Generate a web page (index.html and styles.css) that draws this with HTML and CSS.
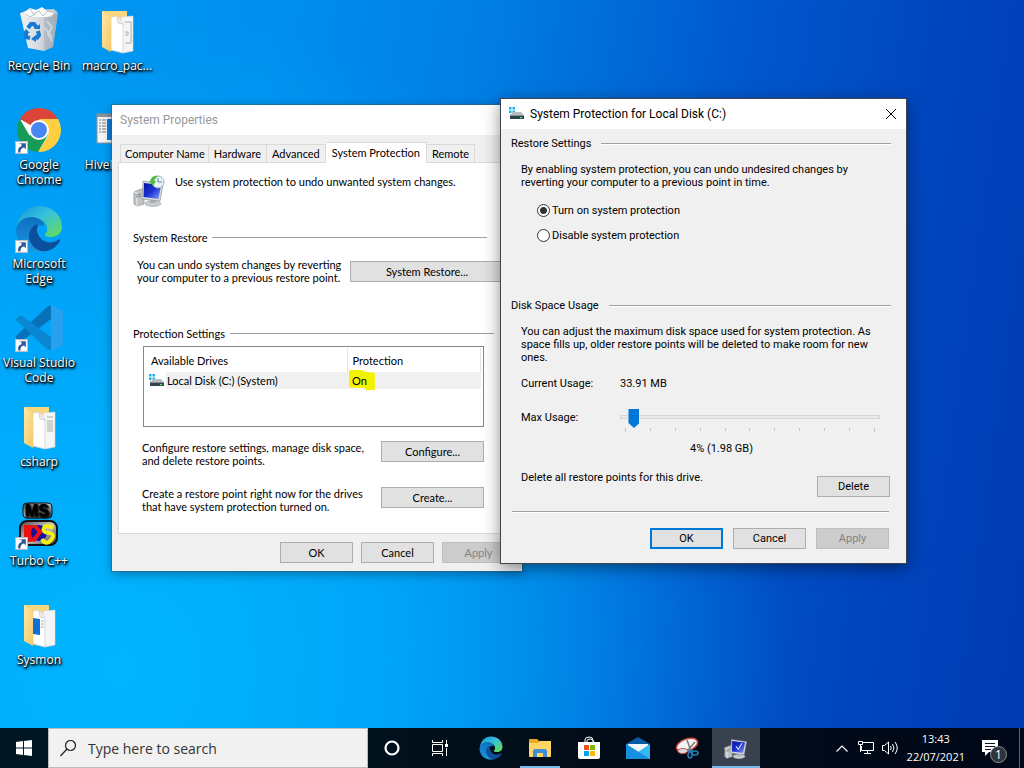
FILE: index.html
```html
<!DOCTYPE html>
<html lang="en">
<head>
  <meta charset="UTF-8">
  <meta name="viewport" content="width=device-width, initial-scale=1.0">
  <title>Desktop</title>
  <link rel="stylesheet" href="styles.css">
</head>
<body>
  <svg class="defs" aria-hidden="true">
    <defs>
      <linearGradient id="folderFront" x1="0" y1="0" x2="1" y2="1">
        <stop offset="0" stop-color="#ffe9a6"/>
        <stop offset="1" stop-color="#f3c767"/>
      </linearGradient>
      <linearGradient id="edgeTop" x1="0" y1="0" x2="1" y2="1">
        <stop offset="0" stop-color="#1593d8"/>
        <stop offset=".45" stop-color="#35c1dc"/>
        <stop offset="1" stop-color="#6bdd4c"/>
      </linearGradient>
      <linearGradient id="edgeBody" x1="0" y1="0" x2="0" y2="1">
        <stop offset="0" stop-color="#0c6fc0"/>
        <stop offset="1" stop-color="#1e97e0"/>
      </linearGradient>
      <linearGradient id="screen" x1="0" y1="0" x2="1" y2="1">
        <stop offset="0" stop-color="#0a12a0"/>
        <stop offset=".5" stop-color="#1c32d2"/>
        <stop offset="1" stop-color="#8aa6f8"/>
      </linearGradient>
      <linearGradient id="metal" x1="0" y1="0" x2="1" y2="1">
        <stop offset="0" stop-color="#444"/>
        <stop offset=".5" stop-color="#ccc"/>
        <stop offset="1" stop-color="#333"/>
      </linearGradient>
      <linearGradient id="bin" x1="0" y1="0" x2="1" y2="0">
        <stop offset="0" stop-color="#eef2f5"/>
        <stop offset=".5" stop-color="#d5dadf"/>
        <stop offset="1" stop-color="#a9b4bf"/>
      </linearGradient>
      <symbol id="shortcut" viewBox="0 0 12 12">
        <rect x=".5" y=".5" width="11" height="11" fill="#fff" stroke="#b8bcc4"/>
        <path d="M3 10.500c-.6-3 .6-5 3-5.600V2.500h-2L4 2h6v5.500L8.300 6C6 6.500 4.800 8 5 10.500z" fill="#2a5a9c"/>
      </symbol>
      <symbol id="folder" viewBox="0 0 48 48">
        <path d="M9 4h25v36H18z" fill="#f8d77c"/>
        <path d="M28 10l12-1v35l-10 2z" fill="#f4f5f6" stroke="#d2d6d9" stroke-width=".6"/>
        <path d="M18 10l6-1 6 7v30l-12-3z" fill="#fff" stroke="#d0d4d7" stroke-width=".8"/>
        <path d="M24 9l1 7 5 1" fill="#eee" stroke="#bbb" stroke-width=".6"/>
        <path d="M9 4l9 7v34l-9-5z" fill="url(#folderFront)"/>
      </symbol>
      <symbol id="edge" viewBox="0 0 48 48">
        <path d="M2 23C3 10 12 1 24 1c13 0 23 9 23 21 0 6-5 10-11 10-4 0-7-1-6-3 3-2 3-8-1-12-7-6-19-5-27 6z" fill="url(#edgeTop)"/>
        <path d="M1 25c1-8 8-13 15-13 8 0 13 4 13 9-8-3-14 3-13 10 1 8 8 14 16 15C15 51 1 40 1 25z" fill="url(#edgeBody)"/>
        <path d="M20 20c-6 4-8 11-4 18 5 10 18 11 26 2 2-2 3-4 3-5 0-1-1-1-2 0-6 4-15 3-19-4-2-3-3-7-1-10 0-1-1-2-3-1z" fill="#0c4f9d"/>
      </symbol>
      <symbol id="drive" viewBox="0 0 16 16">
        <path d="M0 1h2.500v2.500H0zM3.500 1H6v2.500H3.500zM0 4.500h2.500V7H0zM3.500 4.500H6V7H3.500z" fill="#15b3ea"/>
        <path d="M3 6h9l3 3.500H1V8h2z" fill="#b5bdc3"/>
        <path d="M1 9.500h14V13H1z" fill="#33434b"/>
        <path d="M11 11h2v1.300h-2z" fill="#4af06a"/>
      </symbol>
      <symbol id="computer" viewBox="0 0 32 32">
        <path d="M1 17l7-3 3 2v13l-7 2-3-2z" fill="#bfc3c6" stroke="#8b9094" stroke-width=".7"/>
        <path d="M1 17l3 1v13" fill="none" stroke="#eee"/>
        <path d="M3 20l5-1M3 22l5-1" stroke="#777" stroke-width=".8"/>
        <ellipse cx="20" cy="28.500" rx="8" ry="3" fill="#c9cccf" stroke="#9a9ea1" stroke-width=".6"/>
        <path d="M17 24h6v4h-6z" fill="#aeb2b5"/>
        <path d="M10 6l20 3-3 17-18-2z" fill="#d9dcde" stroke="#8e9396" stroke-width=".7"/>
        <path d="M11 8l17 2-2.500 14L10.500 22z" fill="url(#screen)"/>
      </symbol>
    </defs>
  </svg>

  <main class="desktop">
    <nav class="shortcuts" aria-label="Desktop shortcuts">
      <button class="shortcut" type="button">
        <svg viewBox="0 0 48 48">
          <path d="M5 6h38l-5 34-9 4-16-3z" fill="url(#bin)"/>
          <path d="M5 6l8-3 26-1 4 4z" fill="#c5ccd2"/>
          <path d="M8 6l7-5 6 2 6-3 6 5 6 1-3 4H11z" fill="#f7f8f9"/>
          <path d="M15 1l3 6 6-3 4 5 5-5M10 7l5 3 6-3" fill="none" stroke="#bfc5ca"/>
          <path d="M29 11l14-5-5 34-9 4z" fill="#96a1ad" opacity=".4"/>
          <path d="M32 14l5 6-4 7 4 7M29 20l8 10" fill="none" stroke="#eef1f3" stroke-width="2" opacity=".5"/>
          <path d="M13 21l3-4h3l3 4M23 24l1 4-3 4M15 31l-4-1v-4" fill="none" stroke="#157ad4" stroke-width="4"/>
          <path d="M19 22h6v-5zM21 28v7l-5-3zM8 26l3-4 4 4z" fill="#157ad4"/>
        </svg>
        <span>Recycle Bin</span>
      </button>
      <button class="shortcut" type="button">
        <svg viewBox="0 0 48 48">
          <circle cx="24" cy="24" r="21" fill="#fff"/>
          <path d="M24 24L4.900 13A22 22 0 0 1 43.100 13z" fill="#dc4437"/>
          <path d="M24 13h19.100A22 22 0 0 1 23 46l10.500-16.500z" fill="#ffce41"/>
          <path d="M4.900 13A22 22 0 0 0 23 46l10-17-9-5-9.500 5.500z" fill="#179c58"/>
          <circle cx="24" cy="24" r="10" fill="#fff"/>
          <circle cx="24" cy="24" r="8" fill="#4a86f2"/>
          <use href="#shortcut" x="0" y="35" width="13" height="13"/>
        </svg>
        <span>Google<br>Chrome</span>
      </button>
      <button class="shortcut" type="button">
        <svg viewBox="0 0 48 48">
          <use href="#edge" width="48" height="48"/>
          <use href="#shortcut" x="0" y="35" width="13" height="13"/>
        </svg>
        <span>Microsoft<br>Edge</span>
      </button>
      <button class="shortcut" type="button">
        <svg viewBox="0 0 48 48">
          <path d="M2 31l30-28q2-2 4-1v13L7 37q-2 1-4-1l-2-2q-1-1 1-3z" fill="#0871b7"/>
          <path d="M2 17l30 28q2 2 4 1V33L7 12q-2-1-4 1l-2 2q-1 1 1 2z" fill="#0b86d2"/>
          <path d="M36 1l12 6v34l-12 6z" fill="#27a1ef"/>
          <use href="#shortcut" x="0" y="35" width="13" height="13"/>
        </svg>
        <span>Visual Studio<br>Code</span>
      </button>
      <button class="shortcut" type="button">
        <svg viewBox="0 0 48 48">
          <use href="#folder" width="48" height="48"/>
          <path d="M32 14h6M32 18h6M32 20h6M32 22h6M32 24h6M32 26h6M32 28h6" stroke="#999" stroke-width=".8"/>
        </svg>
        <span>csharp</span>
      </button>
      <button class="shortcut" type="button">
        <svg viewBox="0 0 48 48" class="dos-icon">
          <rect x="8" y="1" width="29" height="15" rx="4" fill="url(#metal)" stroke="#111"/>
          <text x="22" y="14" text-anchor="middle">MS</text>
          <rect x="5" y="19" width="37" height="24" rx="7" fill="url(#metal)" stroke="#111" stroke-width="2"/>
          <path d="M9 23h8q8 0 7 8-2 9-10 9H9z" fill="#ee1111"/>
          <circle cx="24" cy="31" r="8" fill="#14129c"/>
          <path d="M20 24l5 6-7 9" fill="none" stroke="#ee1111" stroke-width="4"/>
          <path d="M38 26q-7-4-9 0t5 5 2 7-9-1" fill="none" stroke="#f6ee12" stroke-width="4"/>
          <use href="#shortcut" x="0" y="35" width="13" height="13"/>
        </svg>
        <span>Turbo C++</span>
      </button>
      <button class="shortcut" type="button">
        <svg viewBox="0 0 48 48">
          <use href="#folder" width="48" height="48"/>
          <path d="M18 17l7 1v16l-7-1z" fill="#0c70d8"/>
          <path d="M26 20h3M26 23h3M26 26h3" stroke="#aaa"/>
        </svg>
        <span>Sysmon</span>
      </button>
      <button class="shortcut" type="button">
        <svg viewBox="0 0 48 48">
          <use href="#folder" width="48" height="48"/>
          <path d="M32 15h6v21h-6M32 28h3v-3h-3" fill="none" stroke="#999" stroke-width=".8"/>
        </svg>
        <span>macro_pac...</span>
      </button>
      <button class="shortcut" type="button">
        <svg viewBox="0 0 48 48">
          <rect x="4" y="8" width="40" height="29" fill="#f5f5f5" stroke="#8d9297"/>
          <path d="M4 8h40v3H4z" fill="#8d9297"/>
          <path d="M6 14h2M9 14h4M6 17h2M9 17h4M6 20h2M9 20h4M6 23h2M9 23h4M6 26h2M9 26h4" stroke="#777"/>
          <path d="M14 13h28v21H14z" fill="#0a78d8"/>
        </svg>
        <span>HiveNight...</span>
      </button>
    </nav>

    <section class="window properties" aria-label="System Properties">
      <header class="titlebar inactive">
        <h2>System Properties</h2>
      </header>
      <div class="properties-body">
        <div class="tabs" role="tablist">
          <button type="button" role="tab">Computer Name</button>
          <button type="button" role="tab">Hardware</button>
          <button type="button" role="tab">Advanced</button>
          <button type="button" role="tab" class="active" aria-selected="true">System Protection</button>
          <button type="button" role="tab">Remote</button>
        </div>
        <div class="panel">
          <div class="intro">
            <svg viewBox="0 0 32 32">
              <use href="#computer" width="32" height="32"/>
              <circle cx="25" cy="7" r="6" fill="#e8f1f8" stroke="#9fb4c4"/>
              <path d="M25 3v4h4" fill="none" stroke="#6f8ba3"/>
              <path d="M16 6l4 5 3-5h-2q1-3 4-5-6-1-8 5z" fill="#4fc03c"/>
            </svg>
            <p>Use system protection to undo unwanted system changes.</p>
          </div>

          <h3 class="group-title restore-title">System Restore</h3>
          <div class="setting restore">
            <p>You can undo system changes by reverting your computer to a previous restore point.</p>
            <button type="button" class="btn">System Restore...</button>
          </div>

          <h3 class="group-title">Protection Settings</h3>
          <div class="drives-box">
            <table class="drives">
              <thead>
                <tr><th>Available Drives</th><th>Protection</th></tr>
              </thead>
              <tbody>
                <tr>
                  <td><span class="drive"><svg viewBox="0 0 16 16"><use href="#drive"/></svg><span>Local Disk (C:) (System)</span></span></td>
                  <td><span class="marked">On</span></td>
                </tr>
              </tbody>
            </table>
          </div>
          <div class="setting">
            <p>Configure restore settings, manage disk space, and delete restore points.</p>
            <button type="button" class="btn">Configure...</button>
          </div>
          <div class="setting">
            <p>Create a restore point right now for the drives that have system protection turned on.</p>
            <button type="button" class="btn">Create...</button>
          </div>
        </div>
        <div class="buttons">
          <button type="button" class="btn">OK</button>
          <button type="button" class="btn">Cancel</button>
          <button type="button" class="btn" disabled>Apply</button>
        </div>
      </div>
    </section>

    <section class="window protection" aria-label="System Protection for Local Disk (C:)">
      <header class="titlebar">
        <svg class="title-icon" viewBox="0 0 16 16"><use href="#drive"/></svg>
        <h2>System Protection for Local Disk (C:)</h2>
        <button type="button" class="close" aria-label="Close">
          <svg viewBox="0 0 12 12"><path d="M1 1l10 10M11 1L1 11" stroke="#000" fill="none"/></svg>
        </button>
      </header>
      <form class="protection-body">
        <h3 class="group-title">Restore Settings</h3>
        <div class="group restore-settings">
          <p>By enabling system protection, you can undo undesired changes by reverting your computer to a previous point in time.</p>
          <div class="radios">
            <label><input type="radio" name="protection" checked> Turn on system protection</label>
            <label><input type="radio" name="protection"> Disable system protection</label>
          </div>
        </div>

        <h3 class="group-title">Disk Space Usage</h3>
        <div class="group disk-usage">
          <p>You can adjust the maximum disk space used for system protection. As space fills up, older restore points will be deleted to make room for new ones.</p>
          <div class="usage-row">
            <span>Current Usage:</span>
            <span>33.91 MB</span>
          </div>
          <div class="usage-row">
            <label for="maxUsage">Max Usage:</label>
            <input type="range" id="maxUsage" min="1" max="100" value="4">
          </div>
          <div class="ticks">
            <i></i><i></i><i></i><i></i><i></i><i></i><i></i><i></i><i></i><i></i><i></i>
          </div>
          <output for="maxUsage">4% (1.98 GB)</output>
          <div class="delete-row">
            <p>Delete all restore points for this drive.</p>
            <button type="button" class="btn">Delete</button>
          </div>
        </div>
        <hr>
        <div class="buttons">
          <button type="button" class="btn default">OK</button>
          <button type="button" class="btn">Cancel</button>
          <button type="button" class="btn" disabled>Apply</button>
        </div>
      </form>
    </section>
  </main>

  <footer class="taskbar">
    <button type="button" class="task" aria-label="Start">
      <svg width="16" height="16" viewBox="0 0 16 16"><path d="M0 2l7-1v6.500H0zM8 .9L16 0v7.500H8zM0 8.500h7V15l-7-1zM8 8.500h8V16l-8-.9z" fill="#fff"/></svg>
    </button>
    <label class="search">
      <svg width="16" height="17" viewBox="0 0 16 17"><circle cx="10.500" cy="5.500" r="5" fill="none" stroke="#222" stroke-width="1.200"/><path d="M7 9L.5 16" stroke="#222" stroke-width="1.200"/></svg>
      <input type="text" placeholder="Type here to search" aria-label="Search">
    </label>
    <button type="button" class="task" aria-label="Cortana">
      <svg width="16" height="16" viewBox="0 0 16 16"><circle cx="8" cy="8" r="6.500" fill="none" stroke="#fff" stroke-width="2.200"/></svg>
    </button>
    <button type="button" class="task" aria-label="Task View">
      <svg width="16" height="16" viewBox="0 0 16 16" fill="none" stroke="#fff"><path d="M.5 0v2.500h10V0M.5 16v-2.500h10V16M.5 4.500h10v7H.5zM14.500 0v4M14.500 8v8"/><path d="M13 4h3v3h-3z" fill="#fff" stroke="none"/></svg>
    </button>
    <div class="apps">
      <button type="button" class="task" aria-label="Microsoft Edge">
        <svg width="24" height="24"><use href="#edge"/></svg>
      </button>
      <button type="button" class="task open" aria-label="File Explorer">
        <svg width="22" height="18" viewBox="0 0 22 18">
          <path d="M0 1q0-1 1-1h7l2 2h11q1 0 1 1v14H0z" fill="#e9a820"/>
          <path d="M0 4h9l2-2h11v15q0 1-1 1H1q-1 0-1-1z" fill="#ffd566"/>
          <path d="M4 18v-6q0-2 2-2h10q2 0 2 2v6h-4v-4H8v4z" fill="#3f8fd8"/>
        </svg>
      </button>
      <button type="button" class="task" aria-label="Microsoft Store">
        <svg width="24" height="24" viewBox="0 0 24 24">
          <path d="M8 7V4q0-3 4-3t4 3v3M10 7V5q0-2 3-2t4 3v1" fill="none" stroke="#fff"/>
          <path d="M1 6h22v15q0 2-2 2H3q-2 0-2-2z" fill="#fff"/>
          <path d="M7 9h5v5H7z" fill="#f25022"/><path d="M13 9h5v5h-5z" fill="#7fba00"/>
          <path d="M7 15h5v5H7z" fill="#00a4ef"/><path d="M13 15h5v5h-5z" fill="#ffb900"/>
        </svg>
      </button>
      <button type="button" class="task" aria-label="Mail">
        <svg width="24" height="22" viewBox="0 0 24 22">
          <path d="M0 7l12-7 12 7v4H0z" fill="#0d5aa7"/>
          <path d="M2 7h20v5l-10 5-10-5z" fill="#f2f6fa"/>
          <path d="M0 7l12 8 12-8v15H0z" fill="#35b8f1"/>
          <path d="M0 7l24 15H0z" fill="#1490df"/>
        </svg>
      </button>
      <button type="button" class="task" aria-label="Snipping Tool">
        <svg width="24" height="22" viewBox="0 0 24 22">
          <ellipse cx="12" cy="8" rx="11" ry="6" transform="rotate(-20 12 8)" fill="#f4f4f4" stroke="#d0433c" stroke-width="1.500"/>
          <path d="M3 13q4-3 11 0l-3 3q-5 2-8-1z" fill="#d9dbdd" stroke="#c34b45"/>
          <path d="M12 3l4 11M20 5l-7 8" stroke="#777" stroke-width="1.500"/>
          <g fill="none" stroke="#2380b8" stroke-width="1.500"><ellipse cx="15" cy="18" rx="2" ry="3"/><ellipse cx="20" cy="16" rx="3" ry="2"/><path d="M12 14l6 0"/></g>
        </svg>
      </button>
      <button type="button" class="task active" aria-label="System Properties">
        <svg width="24" height="24" viewBox="0 0 32 32"><use href="#computer" width="32" height="32"/><path d="M16 15l3 4 5-8" fill="none" stroke="#dfe6ff" stroke-width="1.500"/></svg>
      </button>
    </div>
    <div class="tray">
      <svg width="12" height="7" viewBox="0 0 12 7"><path d="M.5 6.500L6 1l5.500 5.500" fill="none" stroke="#fff" stroke-width="1.200"/></svg>
      <svg width="16" height="14" viewBox="0 0 16 14" fill="none" stroke="#fff"><path d="M5 1.500h10.500v8H3.500V5M9.500 9.500v3M6 12.500h7M.5.500h4v3h-4zM2.500 4v7"/></svg>
      <svg width="17" height="14" viewBox="0 0 17 14" fill="none" stroke="#fff"><path d="M.5 4.500h2l4-3.500v12l-4-3.500h-2zM8.500 5q1.500 2 0 4M10.500 3q3 4 0 8M13 1q4.500 6 0 12"/></svg>
      <time class="clock" datetime="2021-07-22T13:43"><span>13:43</span><span>22/07/2021</span></time>
      <button type="button" class="notifications" aria-label="1 new notification">
        <svg width="16" height="16" viewBox="0 0 16 16"><path d="M0 0h16v12H7l-4 4v-4H0z" fill="#fff"/><path d="M3 3.500h10M3 6.500h10M3 9.500h6" stroke="#0a1320"/></svg>
        <span class="badge">1</span>
      </button>
    </div>
  </footer>
</body>
</html>
```
FILE: styles.css
```css
* {
  box-sizing: border-box;
}

body {
  margin: 0;
  height: 100vh;
  display: flex;
  flex-direction: column;
  overflow: hidden;
  font-family: Roboto, Arial, sans-serif;
  font-size: 11px;
  line-height: 13px;
  color: #000;
}

h2,
h3,
p {
  margin: 0;
  font-size: inherit;
  font-weight: normal;
}

button,
input {
  font: inherit;
  color: inherit;
}

svg {
  display: block;
  flex: none;
}

.defs {
  position: absolute;
  width: 0;
  height: 0;
}

/* desktop */
.desktop {
  flex: 1;
  position: relative;
  min-height: 0;
  background:
    radial-gradient(ellipse 65% 90% at 12% 92%, rgba(0, 184, 255, 0.9), rgba(0, 178, 255, 0.75) 40%, rgba(0, 165, 248, 0)),
    linear-gradient(98deg, #0098f2 0%, #0090ee 25%, #007ce2 45%, #0056cc 68%, #0046be 84%, #003ab2 100%);
}

.shortcuts {
  display: grid;
  grid-template-rows: repeat(7, 99px);
  grid-auto-columns: 78px;
  grid-auto-flow: column;
  padding-top: 7px;
}

.shortcut {
  display: flex;
  flex-direction: column;
  align-items: center;
  gap: 3px;
  padding: 0;
  border: none;
  background: none;
  color: #fff;
  font-family: "Open Sans", sans-serif;
  font-size: 12px;
  line-height: 15px;
  text-shadow: 0 1px 2px #000, 1px 1px 2px #000, 1px 2px 3px #000;
}

.shortcut svg {
  width: 48px;
  height: 48px;
}

.dos-icon text {
  font-family: "Liberation Sans", sans-serif;
  font-size: 16px;
  font-weight: bold;
}

/* windows */
.window {
  position: absolute;
  display: flex;
  flex-direction: column;
  background: #f0f0f0;
}

.properties {
  left: 112px;
  top: 105px;
  width: 410px;
  box-shadow: 0 0 0 1px rgba(60, 90, 110, 0.5), 0 3px 10px rgba(0, 0, 0, 0.35);
}

.protection {
  left: 501px;
  top: 99px;
  width: 405px;
  box-shadow: 0 0 0 1px #3c4650, 0 4px 16px rgba(0, 0, 0, 0.5);
}

.titlebar {
  display: flex;
  align-items: center;
  height: 30px;
  padding-left: 8px;
  background: #fff;
  font-size: 12px;
}

.titlebar.inactive {
  color: #999;
}

.title-icon {
  width: 16px;
  height: 16px;
  margin-right: 5px;
}

.close {
  margin-left: auto;
  padding: 9px;
  border: none;
  background: none;
}

.close svg {
  width: 12px;
  height: 12px;
}

.btn {
  width: 73px;
  height: 21px;
  padding: 0;
  border: 1px solid #adadad;
  background: #e1e1e1;
  white-space: nowrap;
  flex: none;
}

.btn.default {
  border: 2px solid #0078d7;
}

.btn:disabled {
  border-color: #bfbfbf;
  background: #ccc;
  color: #838383;
}

.buttons {
  display: flex;
  justify-content: flex-end;
  gap: 8px;
}

.group-title {
  display: flex;
  align-items: center;
  gap: 5px;
}

.group-title::after {
  content: "";
  flex: 1;
  height: 1px;
  background: #a0a0a0;
}

/* system properties */
.properties-body {
  padding: 7px 6px 8px;
  font-family: Lato, Arial, sans-serif;
}

.tabs {
  display: flex;
  align-items: flex-end;
  padding-left: 2px;
}

.tabs button {
  height: 18px;
  padding: 0 5px;
  border: 1px solid #d9d9d9;
  border-width: 1px 1px 0 0;
  background: #f0f0f0;
  white-space: nowrap;
}

.tabs button:first-child {
  padding: 0 3px 0 4px;
  border-left-width: 1px;
}

.tabs .active {
  height: 21px;
  margin-bottom: -1px;
  padding: 0 6px 2px;
  background: #fff;
}

.panel {
  padding: 12px 21px 20px 14px;
  border: 1px solid #dcdcdc;
  background: #fff;
}

.intro {
  display: flex;
  gap: 10px;
}

.intro svg {
  width: 32px;
  height: 32px;
}

.restore-title {
  margin: 24px 7px 0 0;
}

.setting {
  display: flex;
  justify-content: space-between;
  margin-left: 9px;
  padding-right: 10px;
}

.setting p {
  width: 239px;
}

.setting .btn {
  width: 103px;
}

.setting + .setting {
  margin-top: 20px;
}

.restore {
  margin: 14px 0 43px 4px;
  padding-right: 0;
}

.restore p {
  width: 212px;
}

.restore .btn {
  width: 154px;
  margin: 3px -10px 0 0;
}

.drives-box {
  height: 81px;
  margin: 6px 10px 14px;
  padding: 1px 2px;
  border: 1px solid #828790;
}

.drives {
  width: 100%;
  table-layout: fixed;
  border-collapse: collapse;
}

.drives th,
.drives td {
  padding: 0 0 0 5px;
  font-weight: normal;
  text-align: left;
}

.drives th {
  height: 24px;
  border-right: 1px solid #e5e5e5;
}

.drives th:first-child {
  width: 201px;
}

.drives td {
  height: 17px;
  background: #f0f0f0;
}

.drives td:first-child {
  padding-left: 3px;
  background: linear-gradient(90deg, #fff 20px, #f0f0f0 20px);
}

.drive {
  display: flex;
  align-items: center;
  gap: 2px;
}

.drive svg {
  width: 16px;
  height: 16px;
}

.marked {
  position: relative;
  z-index: 0;
}

.marked::before {
  content: "";
  position: absolute;
  z-index: -1;
  inset: -4px -8px -3px -3px;
  background: #f3f300;
  clip-path: polygon(0 0, 50% 0, 60% 8%, 100% 15%, 100% 100%, 66% 100%, 60% 90%, 0 88%);
}

.properties-body .buttons {
  margin-top: 8px;
  padding-right: 1px;
}

/* system protection */
.protection-body {
  padding: 8px 15px 14px 10px;
}

.protection-body .group-title {
  gap: 10px;
}

.protection-body .group-title::after {
  box-shadow: 0 1px #fff;
}

.group {
  padding: 0 0 0 10px;
}

.restore-settings {
  padding-top: 13px;
  margin-bottom: 57px;
}

.radios {
  display: flex;
  flex-direction: column;
  gap: 12px;
  margin: 15px 0 0 16px;
}

.radios label {
  display: flex;
  align-items: center;
  gap: 2px;
}

.radios input {
  appearance: none;
  width: 13px;
  height: 13px;
  margin: 0;
  border: 1px solid #333;
  border-radius: 50%;
  background: #fff;
}

.radios input:checked {
  background: radial-gradient(circle, #333 3px, #fff 4px);
}

.disk-usage {
  padding-top: 13px;
}

.disk-usage p {
  padding-right: 10px;
}

.usage-row {
  display: grid;
  grid-template-columns: 99px 1fr;
  align-items: center;
  margin-top: 13px;
  padding-right: 11px;
}

input[type="range"] {
  appearance: none;
  width: 100%;
  height: 20px;
  margin: 0;
  background: none;
}

.usage-row + .usage-row {
  margin-top: 17px;
}

input[type="range"]::-webkit-slider-runnable-track {
  height: 4px;
  border: 1px solid #d6d6d6;
  background: #e7eaea;
}

input[type="range"]::-webkit-slider-thumb {
  appearance: none;
  width: 11px;
  height: 19px;
  margin-top: -7px;
  background: #0078d7;
  clip-path: polygon(0 0, 100% 0, 100% 74%, 50% 100%, 0 74%);
}

.ticks {
  display: flex;
  justify-content: space-between;
  height: 4px;
  margin: 1px 16px 0 104px;
}

.ticks i {
  width: 1px;
  height: 3px;
  background: #c4c4c4;
}

.ticks i:first-child,
.ticks i:last-child {
  height: 4px;
}

.disk-usage output {
  display: block;
  margin-top: 10px;
  padding-left: 31px;
  text-align: center;
}

.delete-row {
  display: flex;
  justify-content: space-between;
  margin-top: 16px;
  padding-right: 1px;
}

.delete-row .btn {
  margin-top: 5px;
}

hr {
  margin: 14px 2px 15px 1px;
  border: none;
  border-top: 1px solid #a0a0a0;
  border-bottom: 1px solid #fff;
}

.protection-body .buttons {
  gap: 10px;
  padding-right: 2px;
}

/* taskbar */
.taskbar {
  display: flex;
  height: 40px;
  background: linear-gradient(90deg, #001823, #010c18 60%, #010818);
  color: #fff;
  font-family: "Open Sans", sans-serif;
}

.task {
  display: flex;
  align-items: center;
  justify-content: center;
  width: 48px;
  padding: 0;
  border: none;
  background: none;
  flex: none;
}

.search {
  display: flex;
  align-items: center;
  gap: 12px;
  width: 320px;
  padding-left: 11px;
  border: 1px solid #bbb;
  background: #f1f1f1;
}

.search input {
  flex: 1;
  min-width: 0;
  padding: 0;
  border: none;
  outline: none;
  background: none;
  font-size: 14px;
}

.search input::placeholder {
  color: #333;
}

.apps {
  display: flex;
  gap: 1px;
  margin-left: 3px;
}

.open {
  background: linear-gradient(#76b9ed, #76b9ed) center bottom / 40px 2px no-repeat;
}

.active.task {
  border-bottom: 2px solid #76b9ed;
  background: #38424e;
}

.tray {
  display: flex;
  align-items: center;
  gap: 8px;
  margin-left: auto;
  margin-right: 4px;
  border-right: 1px solid #596069;
}

.tray svg:first-child {
  margin-right: 2px;
}

.clock {
  display: flex;
  flex-direction: column;
  align-items: center;
  font-size: 11px;
  line-height: 18px;
}

.notifications {
  position: relative;
  margin-left: 9px;
  padding: 0 19px 0 0;
  border: none;
  background: none;
}

.badge {
  position: absolute;
  left: 8px;
  top: 6px;
  width: 17px;
  height: 17px;
  border: 1px solid #8b8f94;
  border-radius: 50%;
  background: #30353b;
  font-size: 12px;
  line-height: 15px;
}
```
